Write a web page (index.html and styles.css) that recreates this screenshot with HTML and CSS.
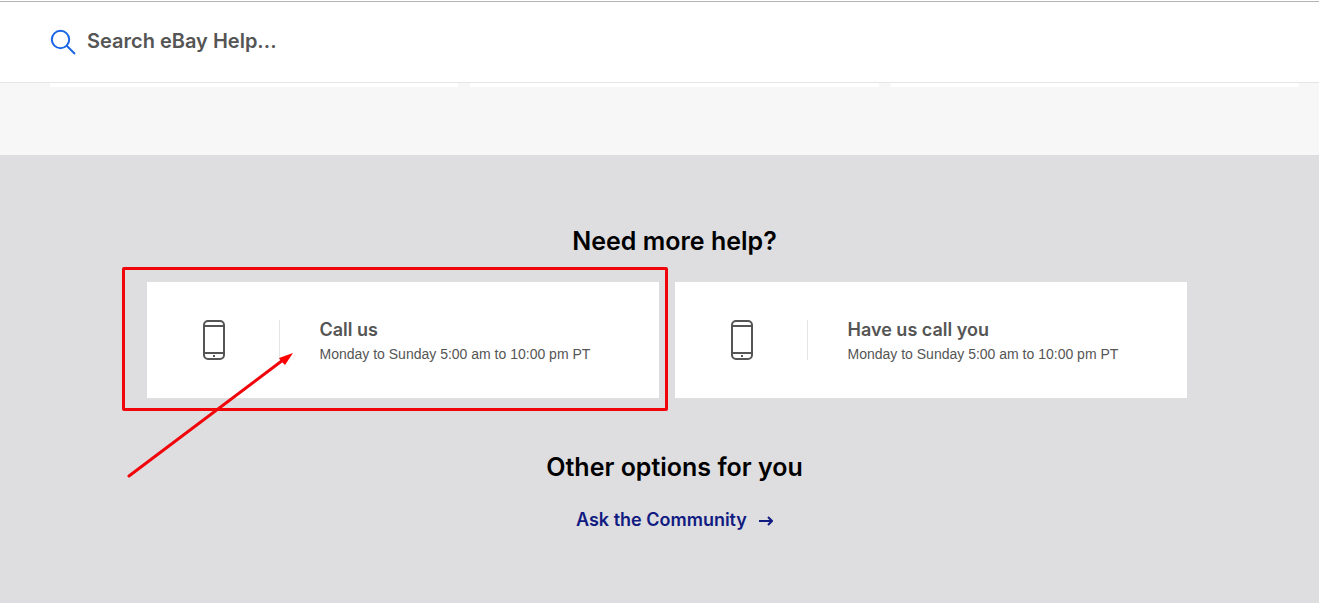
FILE: index.html
```
<!doctype html>
<html lang="en">
<head>
	<meta charset="UTF-8">
	<meta name="viewport" content="width=device-width, initial-scale=1">
	<title>eBay Help</title>
	<link rel="stylesheet" href="styles.css">
</head>
<body>
	<header class="top">
		<form class="search" role="search">
			<label for="q" aria-label="Search">
				<svg width="26" height="26" viewBox="0 0 26 26" fill="none" stroke="#1a66e6" stroke-width="2">
					<circle cx="10.5" cy="10.5" r="8.7"/>
					<path d="M16.5 16.5L25 25"/>
				</svg>
			</label>
			<input id="q" type="text" placeholder="Search eBay Help...">
		</form>
	</header>
	<div class="tiles">
		<div></div>
		<div></div>
		<div></div>
	</div>
	<main class="help">
		<h2>Need more help?</h2>
		<div class="cards">
			<div class="card marked">
				<div class="icon">
					<svg width="22" height="40" viewBox="0 0 22 40" fill="none" stroke="#555" stroke-width="2">
						<rect x="1" y="1" width="20" height="38" rx="4"/>
						<path d="M1 6h20M1 33h20"/>
						<rect x="10" y="35" width="2" height="2" fill="#555" stroke="none"/>
					</svg>
				</div>
				<div class="info">
					<h3>Call us</h3>
					<p>Monday to Sunday 5:00 am to 10:00 pm PT</p>
				</div>
				<svg class="arrow" width="168" height="128" viewBox="0 0 168 128">
					<path d="M2 125L156 9" stroke="#f0060a" stroke-width="3" stroke-linecap="round"/>
					<path d="M166 2L152 7L154 10L158 14Z" fill="#f00"/>
				</svg>
			</div>
			<div class="card">
				<div class="icon">
					<svg width="22" height="40" viewBox="0 0 22 40" fill="none" stroke="#555" stroke-width="2">
						<rect x="1" y="1" width="20" height="38" rx="4"/>
						<path d="M1 6h20M1 33h20"/>
						<rect x="10" y="35" width="2" height="2" fill="#555" stroke="none"/>
					</svg>
				</div>
				<div class="info">
					<h3>Have us call you</h3>
					<p>Monday to Sunday 5:00 am to 10:00 pm PT</p>
				</div>
			</div>
		</div>
		<h2>Other options for you</h2>
		<a class="more" href="#">Ask the Community
			<svg width="14" height="12" viewBox="0 0 14 12" fill="none" stroke="currentColor" stroke-width="2">
				<path d="M0 7h13M9 3l4 4l-4 4"/>
			</svg>
		</a>
	</main>
</body>
</html>
```
FILE: styles.css
```
* { box-sizing:border-box; }
html { background:#dedee0; }
body { margin:0; padding-top:1px; background:#fff; font-family:Inter,"Liberation Sans",sans-serif; color:#555; }
h2,h3,p { margin:0; }
svg { display:block; }

.top { height:82px; border-top:1px solid #b4b4b4; border-bottom:1px solid #e5e5e8; padding:0 20px 0 50px; }
.search { display:flex; align-items:center; gap:11px; height:78px; }
.search label { padding-top:2px; }
.search input { flex:1; min-width:0; height:40px; padding:0; border:0; outline:none; background:none; font:600 20px/24px Inter,"Liberation Sans",sans-serif; color:#555; }
.search input::placeholder { color:#555; opacity:1; }

.tiles { display:flex; gap:12px; height:72px; padding:0 20px 0 50px; background:#f7f7f7; }
.tiles div { flex:1; height:4px; background:#fff; }

.help { padding:70px 20px 70px 50px; background:#dedee0; text-align:center; }
.help h2 { font-size:25px; line-height:32px; font-weight:600; color:#000; }
.cards { display:flex; justify-content:center; gap:16px; margin:25px 0 53px; padding-right:16px; }
.card { position:relative; display:flex; align-items:center; flex:0 1 512px; min-height:116px; background:#fff; text-align:left; }
.icon { padding:0 54px 0 56px; border-right:1px solid #e5e5e5; }
.info { padding-left:40px; }
.info h3 { font-size:18px; line-height:28px; font-weight:600; }
.info p { font:14px/20px "Liberation Sans",sans-serif; }
.more { display:inline-flex; align-items:center; gap:12px; margin-top:25px; font-size:18px; line-height:24px; font-weight:600; color:#111b82; text-decoration:none; }

/* red frame and arrow over the first card */
.marked::after { content:""; position:absolute; top:-15px; right:-9px; bottom:-13px; left:-25px; border:3px solid #f0060a; border-radius:2px; }
.arrow { position:absolute; left:-20px; top:69px; z-index:1; }
```
